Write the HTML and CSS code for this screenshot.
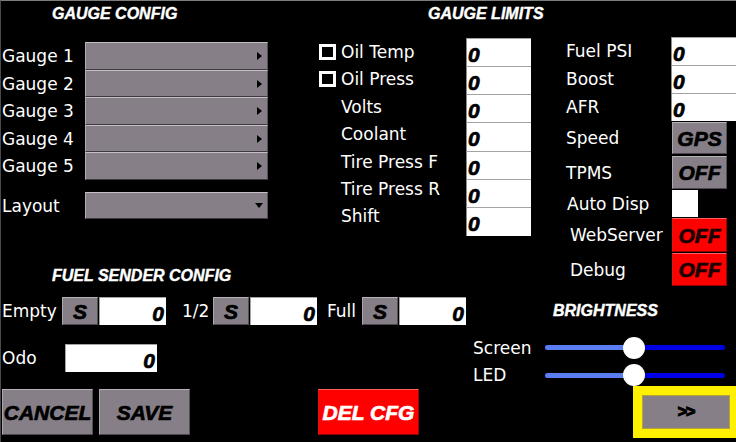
FILE: index.html
```html
<!DOCTYPE html>
<html>
<head>
<meta charset="utf-8">
<title>Config</title>
<link rel="stylesheet" href="styles.css">
</head>
<body>
<div class="screen">
  <div class="band-top">
    <section class="col-config">
      <h2 class="title">GAUGE CONFIG</h2>
      <div class="gauge-list">
        <div class="row"><span class="lbl">Gauge 1</span><div class="dropdown"><span class="tri-right"></span></div></div>
        <div class="row"><span class="lbl">Gauge 2</span><div class="dropdown"><span class="tri-right"></span></div></div>
        <div class="row"><span class="lbl">Gauge 3</span><div class="dropdown"><span class="tri-right"></span></div></div>
        <div class="row"><span class="lbl">Gauge 4</span><div class="dropdown"><span class="tri-right"></span></div></div>
        <div class="row"><span class="lbl">Gauge 5</span><div class="dropdown"><span class="tri-right"></span></div></div>
      </div>
      <div class="row layout-row"><span class="lbl">Layout</span><div class="dropdown"><span class="tri-down"></span></div></div>
      <h2 class="title fuel-title">FUEL SENDER CONFIG</h2>
    </section>
    <section class="col-limits">
      <h2 class="title limits-title">GAUGE LIMITS</h2>
      <div class="limits-body">
        <div class="limit-labels">
          <div class="limit-lbl has-check"><span class="check"></span>Oil Temp</div>
          <div class="limit-lbl has-check"><span class="check"></span>Oil Press</div>
          <div class="limit-lbl">Volts</div>
          <div class="limit-lbl">Coolant</div>
          <div class="limit-lbl">Tire Press F</div>
          <div class="limit-lbl">Tire Press R</div>
          <div class="limit-lbl">Shift</div>
        </div>
        <div class="limit-inputs">
          <div class="val">0</div>
          <div class="val">0</div>
          <div class="val">0</div>
          <div class="val">0</div>
          <div class="val">0</div>
          <div class="val">0</div>
          <div class="val">0</div>
        </div>
      </div>
    </section>
    <section class="col-right">
      <div class="r-row"><span class="r-lbl">Fuel PSI</span><div class="val">0</div></div>
      <div class="r-row"><span class="r-lbl">Boost</span><div class="val">0</div></div>
      <div class="r-row"><span class="r-lbl">AFR</span><div class="val">0</div></div>
      <div class="r-row r-speed"><span class="r-lbl">Speed</span><div class="btn tog">GPS</div></div>
      <div class="r-row r-tpms"><span class="r-lbl">TPMS</span><div class="btn tog">OFF</div></div>
      <div class="r-row r-auto"><span class="r-lbl r-lbl-auto">Auto Disp</span><div class="auto-box"></div></div>
      <div class="r-row r-web"><span class="r-lbl r-lbl-in">WebServer</span><div class="btn tog red">OFF</div></div>
      <div class="r-row r-debug"><span class="r-lbl r-lbl-in">Debug</span><div class="btn tog red">OFF</div></div>
    </section>
  </div>
  <div class="band-bottom">
    <div class="bottom-left">
      <div class="fuel-row">
        <span class="f-lbl f-empty">Empty</span>
        <div class="btn s-btn">S</div>
        <div class="num">0</div>
        <span class="f-lbl f-half">1/2</span>
        <div class="btn s-btn">S</div>
        <div class="num">0</div>
        <span class="f-lbl f-full">Full</span>
        <div class="btn s-btn">S</div>
        <div class="num">0</div>
      </div>
      <div class="odo-row">
        <span class="f-lbl odo-lbl">Odo</span>
        <div class="num">0</div>
      </div>
      <div class="actions">
        <div class="btn act cancel">CANCEL</div>
        <div class="btn act save">SAVE</div>
        <div class="btn act red del">DEL CFG</div>
      </div>
    </div>
    <div class="bottom-right">
      <h2 class="title bright-title">BRIGHTNESS</h2>
      <div class="slider-row">
        <span class="s-lbl">Screen</span>
        <div class="slider"><div class="slider-fill" style="width:49.4%"></div><span class="thumb" style="left:49.4%"></span></div>
      </div>
      <div class="slider-row">
        <span class="s-lbl">LED</span>
        <div class="slider"><div class="slider-fill" style="width:49.4%"></div><span class="thumb" style="left:49.4%"></span></div>
      </div>
      <div class="next-frame"><div class="next">&gt;&gt;</div></div>
    </div>
  </div>
</div>
</body>
</html>
```

FILE: styles.css
```css
* { box-sizing: border-box; }
html, body { margin: 0; padding: 0; background: #000; }
body {
  width: 736px;
  height: 442px;
  overflow: hidden;
  font-family: "DejaVu Sans", sans-serif;
  color: #fff;
}
.screen {
  width: 736px;
  height: 442px;
  border-top: 1px solid #7c7c7c;
  border-left: 1px solid #4a4a4a;
  display: flex;
  flex-direction: column;
  overflow: hidden;
}
.band-top { display: flex; height: 289px; flex: none; }
.col-config { width: 299px; flex: none; }
.col-limits { width: 240px; flex: none; }
.col-right { width: 196px; flex: none; padding-top: 36px; }

.title {
  margin: 3px 0 0;
  font: italic bold 16px/20px "Liberation Sans", Arial, sans-serif;
  -webkit-text-stroke: 0.4px #fff;
  color: #fff;
  white-space: nowrap;
}
.col-config .title { padding-left: 51px; }
.limits-title { padding-left: 128px; }

.gauge-list { margin-top: 18.3px; }
.row { display: flex; align-items: center; height: 27.5px; }
.lbl { width: 84px; padding-left: 1px; font-size: 17px; line-height: 20px; flex: none; }
.dropdown {
  width: 183px;
  height: 100%;
  background: #867f87;
  border: 1px solid;
  border-color: #c4bfc5 #56525a #3e3b40 #b2adb3;
  display: flex;
  align-items: center;
  justify-content: flex-end;
  padding-right: 5px;
}
.tri-right {
  width: 0; height: 0;
  border-left: 5px solid #000;
  border-top: 4.5px solid transparent;
  border-bottom: 4.5px solid transparent;
}
.tri-down {
  width: 0; height: 0;
  border-top: 5px solid #000;
  border-left: 4.5px solid transparent;
  border-right: 4.5px solid transparent;
  margin-right: -1px;
}
.layout-row { margin-top: 12.5px; height: 27px; }
.fuel-title { margin-top: 47px; }

.limits-body { display: flex; margin-top: 13.5px; }
.limit-labels { width: 166px; flex: none; padding-top: 0.8px; }
.limit-lbl {
  height: 27.4px;
  display: flex;
  align-items: center;
  padding-left: 41px;
  font-size: 17px;
  line-height: 20px;
  white-space: nowrap;
}
.limit-lbl.has-check { padding-left: 19px; }
.check {
  width: 17px; height: 16px;
  border: 3.5px solid #fff;
  background: #000;
  margin-right: 5px;
  flex: none;
}
.limit-inputs { width: 65px; flex: none; }
.val {
  height: 28.3px;
  background: #fff;
  border-top: 1px solid #a3a3a3;
  border-left: 1px solid #8c8c8c;
  color: #000;
  font: italic bold 21px/22px "Liberation Sans", Arial, sans-serif;
  -webkit-text-stroke: 0.7px #000;
  padding: 5px 0 0 1px;
}

.r-row { display: flex; align-items: center; height: 28px; }
.r-lbl { width: 131px; flex: none; padding-left: 26px; font-size: 17px; line-height: 20px; white-space: nowrap; }
.r-lbl-auto { padding-left: 27px; }
.r-lbl-in { padding-left: 30px; }
.r-row .val { width: 65px; height: 28px; flex: none; }
.r-speed { margin-top: 1px; height: 32px; }
.r-tpms { margin-top: 2px; height: 33px; }
.r-auto { margin-top: 1px; height: 27px; }
.r-web { margin-top: 1px; height: 34px; }
.r-debug { margin-top: 1px; height: 33px; }

.btn {
  display: flex;
  align-items: center;
  justify-content: center;
  font: italic bold 21px/21px "Liberation Sans", Arial, sans-serif;
  -webkit-text-stroke: 0.7px currentColor;
  color: #000;
  background: #867f87;
  border: 1px solid;
  border-color: #b8b3b9 #545056 #4b474d #aca7ad;
  white-space: nowrap;
  flex: none;
}
.tog { width: 55px; height: 100%; margin-left: 1px; }
.red { background: #ff0000; border-color: #ff6060 #a00000 #900000 #d81818; color: #1a0000; }
.auto-box { width: 26px; height: 100%; margin-left: 1px; background: #fff; }

.band-bottom { display: flex; flex: none; height: 152px; }
.bottom-left { width: 469px; flex: none; }
.bottom-right { width: 266px; flex: none; }

.fuel-row { display: flex; align-items: center; height: 28px; margin-top: 7px; }
.f-lbl { font-size: 17px; line-height: 20px; white-space: nowrap; flex: none; }
.f-empty { width: 61px; padding-left: 1px; }
.f-half { width: 47px; padding-left: 16px; }
.f-full { width: 45px; padding-left: 10px; }
.s-btn { width: 36px; height: 100%; }
.num {
  height: 100%;
  background: #fff;
  color: #000;
  font: italic bold 21px/22px "Liberation Sans", Arial, sans-serif;
  -webkit-text-stroke: 0.7px #000;
  text-align: right;
  padding: 5px 2px 0 0;
  border-top: 1px solid #a3a3a3;
  border-left: 1px solid #a3a3a3;
  flex: none;
}
.fuel-row .num { width: 67px; margin-left: 1px; }
.odo-row { display: flex; align-items: center; height: 28px; margin-top: 19px; }
.odo-lbl { width: 64px; padding-left: 1px; }
.odo-row .num { width: 92px; }

.actions { display: flex; height: 46px; margin-top: 17px; }
.act { height: 100%; }
.cancel { width: 91px; margin-left: 1px; }
.save { width: 91px; margin-left: 6px; }
.del { width: 101px; margin-left: 128px; color: #fff; }

.bright-title { margin-top: 11px; padding-left: 83px; }
.slider-row { display: flex; align-items: center; height: 22px; margin-top: 15.5px; }
.slider-row + .slider-row { margin-top: 5.5px; }
.s-lbl { width: 75px; flex: none; padding-left: 3px; font-size: 17px; line-height: 20px; }
.slider {
  position: relative;
  width: 180px;
  height: 5px;
  border-radius: 3px;
  background: #0000e6;
}
.slider-fill { height: 100%; border-radius: 3px 0 0 3px; background: #5a7ef2; }
.thumb {
  position: absolute;
  top: 50%;
  width: 22px;
  height: 22px;
  margin: -11px 0 0 -11px;
  border-radius: 50%;
  background: #fff;
}
.next-frame {
  margin-left: 163px;
  width: 103px;
  height: 52px;
  background: #fff000;
  padding: 9px 6px 9px 9px;
}
.next {
  height: 100%;
  background: #867f87;
  border: 1px solid #b1a43a;
  display: flex;
  align-items: center;
  justify-content: center;
  font: bold 16px/16px "Liberation Sans", Arial, sans-serif;
  -webkit-text-stroke: 1.2px #000;
  letter-spacing: -1px;
  color: #000;
}
```
